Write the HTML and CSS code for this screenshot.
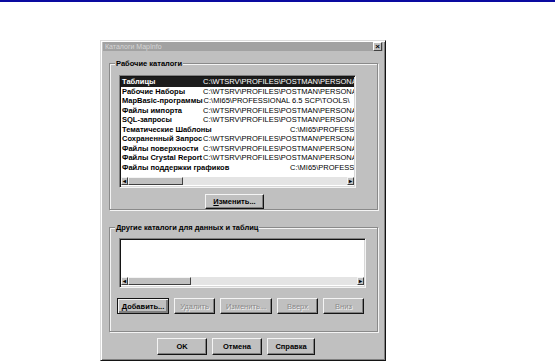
FILE: index.html
```html
<!DOCTYPE html>
<html lang="ru">
<head>
  <meta charset="UTF-8" />
  <title>Каталоги MapInfo</title>
  <link rel="stylesheet" href="styles.css">
</head>
<body>
  <div class="topline"></div>
  <div class="dialog">
    <div class="titlebar">
      <span>Каталоги MapInfo</span>
      <span class="close">×</span>
    </div>

    <fieldset class="group group-top">
      <legend>Рабочие каталоги</legend>
      <div class="listbox list-main">
        <div class="rows">
          <div class="row selected"><span class="name">Таблицы</span><span class="path">C:\WTSRV\PROFILES\POSTMAN\PERSONAL\</span></div>
          <div class="row"><span class="name">Рабочие Наборы</span><span class="path">C:\WTSRV\PROFILES\POSTMAN\PERSONAL\</span></div>
          <div class="row"><span class="name">MapBasic-программы</span><span class="path">C:\MI65\PROFESSIONAL 6.5 SCP\TOOLS\</span></div>
          <div class="row"><span class="name">Файлы импорта</span><span class="path">C:\WTSRV\PROFILES\POSTMAN\PERSONAL\</span></div>
          <div class="row"><span class="name">SQL-запросы</span><span class="path">C:\WTSRV\PROFILES\POSTMAN\PERSONAL\</span></div>
          <div class="row far"><span class="name">Тематические Шаблоны</span><span class="path">C:\MI65\PROFESSIONAL\</span></div>
          <div class="row"><span class="name">Сохраненный Запрос</span><span class="path">C:\WTSRV\PROFILES\POSTMAN\PERSONAL\</span></div>
          <div class="row"><span class="name">Файлы поверхности</span><span class="path">C:\WTSRV\PROFILES\POSTMAN\PERSONAL\</span></div>
          <div class="row"><span class="name">Файлы Crystal Report</span><span class="path">C:\WTSRV\PROFILES\POSTMAN\PERSONAL\</span></div>
          <div class="row far"><span class="name">Файлы поддержки графиков</span><span class="path">C:\MI65\PROFESSIONAL\</span></div>
        </div>
        <div class="hscroll">
          <span class="arrow">◂</span>
          <span class="thumb thumb-main"></span>
          <span class="track"></span>
          <span class="arrow">▸</span>
        </div>
      </div>
      <button class="btn btn-edit"><u>И</u>зменить...</button>
    </fieldset>

    <fieldset class="group group-other">
      <legend>Другие каталоги для данных и таблиц</legend>
      <div class="listbox list-other">
        <div class="rows"></div>
        <div class="hscroll">
          <span class="arrow">◂</span>
          <span class="thumb thumb-other"></span>
          <span class="track"></span>
          <span class="arrow">▸</span>
        </div>
      </div>
      <div class="btn-row">
        <button class="btn btn-wide focused"><u>Д</u>обавить...</button>
        <button class="btn btn-small" disabled>Удалить</button>
        <button class="btn btn-wide" disabled>Изменить...</button>
        <button class="btn btn-small" disabled>Вверх</button>
        <button class="btn btn-small" disabled>Вниз</button>
      </div>
    </fieldset>

    <div class="footer">
      <button class="btn btn-ok">OK</button>
      <button class="btn btn-ok">Отмена</button>
      <button class="btn btn-help">Справка</button>
    </div>
  </div>
</body>
</html>
```

FILE: styles.css
```css
body { margin: 0; background: #fff; font-family: "Liberation Sans", Arial, sans-serif; font-size: 7.5px; font-weight: bold; color: #000; }
.topline { height: 2px; background: #0a0aa0; }

.dialog { box-sizing: border-box; width: 286px; height: 321px; margin: 38px 0 0 100px; padding: 1px 2px 2px 2px; background: #c0c0c0; border: 1px solid; border-color: #dcdcdc #141414 #141414 #dcdcdc; box-shadow: inset 1px 1px #fff, inset -1px -1px #808080; display: flex; flex-direction: column; }
.titlebar { height: 9px; display: flex; justify-content: space-between; align-items: center; background: #a2a2a2; color: #d6d6d6; font-weight: normal; font-size: 7px; padding: 0 1px 0 2px; }
.close { width: 7px; height: 7px; line-height: 7px; text-align: center; font-size: 8px; font-weight: bold; color: #000; background: #c0c0c0; border: 1px solid; border-color: #fff #404040 #404040 #fff; }

.group { margin: 0 5px 0 6px; padding: 0 0 0 9px; border: 1px solid #8a8a8a; box-shadow: inset 1px 1px #f4f4f4, 1px 1px #f4f4f4; min-width: 0; }
.group legend { margin-left: -4px; padding: 0 1px; line-height: 9px; background: #c0c0c0; }
.group-top { margin-top: 8px; height: 151px; box-sizing: border-box; }
.group-other { margin-top: 13px; height: 109px; box-sizing: border-box; }

.listbox { box-sizing: border-box; background: #fff; border: 1px solid; border-color: #808080 #f4f4f4 #f4f4f4 #808080; box-shadow: inset 1px 1px #141414, inset -1px -1px #d8d8d8; padding: 1px; display: flex; flex-direction: column; }
.list-main { width: 237px; height: 113px; margin-top: 7px; }
.list-other { width: 247px; height: 50px; margin-top: 6px; }
.rows { flex: 1; overflow: hidden; }
.row { display: flex; height: 9.5px; line-height: 9.5px; white-space: nowrap; overflow: hidden; padding-left: 1px; }
.row.selected { background: #1c1c1c; color: #fff; }
.name { min-width: 80px; margin-right: 1px; }
.row.far .name { min-width: 167px; }
.path { font-weight: normal; }

.hscroll { display: flex; height: 8px; margin-bottom: 1px; background: #e4e4e4; }
.arrow { box-sizing: border-box; width: 7px; height: 8px; line-height: 7px; font-size: 6px; text-align: center; background: #c0c0c0; border: 1px solid; border-color: #f4f4f4 #404040 #404040 #f4f4f4; }
.thumb { box-sizing: border-box; height: 8px; background: #c0c0c0; border: 1px solid; border-color: #f4f4f4 #404040 #404040 #f4f4f4; }
.thumb-main { width: 55px; }
.thumb-other { width: 63px; }
.track { flex: 1; }

.btn { box-sizing: border-box; height: 16px; padding: 0; font: inherit; color: #000; background: #c0c0c0; border: 1px solid; border-color: #f4f4f4 #141414 #141414 #f4f4f4; box-shadow: inset -1px -1px #808080; }
.btn u { text-decoration: underline; }
.btn:disabled { color: #8a8a8a; font-weight: normal; text-shadow: 1px 1px #f4f4f4; }
.btn-edit { width: 59px; height: 15px; margin: 6px 0 0 86px; }

.btn-row { display: flex; gap: 5px; margin: 10px 0 0 -2px; }
.btn-wide { width: 52px; }
.btn-small { width: 41px; }
.btn.focused { border-color: #141414; box-shadow: inset 1px 1px #f4f4f4, inset -2px -2px #808080; }

.footer { display: flex; gap: 5px; margin: 6px 0 0 54px; }
.btn-ok { width: 50px; height: 17px; }
.btn-help { width: 48px; height: 17px; }
```
